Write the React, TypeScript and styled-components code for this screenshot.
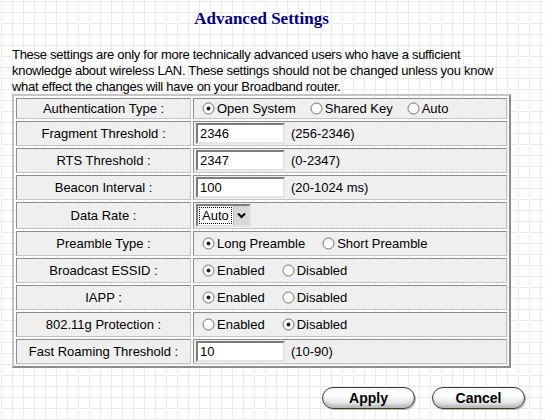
import React from 'react'
import styled, { createGlobalStyle } from 'styled-components'

const GlobalStyle = createGlobalStyle`
  html, body {
    margin: 0;
    padding: 0;
  }
  body {
    width: 545px;
    height: 420px;
    overflow: hidden;
    background-color: #ffffff;
    background-image:
      linear-gradient(to right, #ebebeb 1px, transparent 1px),
      linear-gradient(to bottom, #ebebeb 1px, transparent 1px);
    background-size: 11px 11px;
    background-position: 1px 1px;
    font-family: 'Liberation Sans', Arial, sans-serif;
    font-size: 13px;
    color: #000;
  }
`

interface RadioOpt {
  label: string
  checked?: boolean
}

type Row =
  | { label: string; kind: 'radio'; options: RadioOpt[]; gap?: number; compact?: boolean }
  | { label: string; kind: 'input'; value: string; hint: string }
  | { label: string; kind: 'select'; value: string }

const rows: Row[] = [
  {
    label: 'Authentication Type :',
    kind: 'radio',
    gap: 14,
    compact: true,
    options: [
      { label: 'Open System', checked: true },
      { label: 'Shared Key' },
      { label: 'Auto' }
    ]
  },
  { label: 'Fragment Threshold :', kind: 'input', value: '2346', hint: '(256-2346)' },
  { label: 'RTS Threshold :', kind: 'input', value: '2347', hint: '(0-2347)' },
  { label: 'Beacon Interval :', kind: 'input', value: '100', hint: '(20-1024 ms)' },
  { label: 'Data Rate :', kind: 'select', value: 'Auto' },
  {
    label: 'Preamble Type :',
    kind: 'radio',
    gap: 17,
    options: [{ label: 'Long Preamble', checked: true }, { label: 'Short Preamble' }]
  },
  {
    label: 'Broadcast ESSID :',
    kind: 'radio',
    gap: 17,
    options: [{ label: 'Enabled', checked: true }, { label: 'Disabled' }]
  },
  {
    label: 'IAPP :',
    kind: 'radio',
    gap: 17,
    options: [{ label: 'Enabled', checked: true }, { label: 'Disabled' }]
  },
  {
    label: '802.11g Protection :',
    kind: 'radio',
    gap: 17,
    options: [{ label: 'Enabled' }, { label: 'Disabled', checked: true }]
  },
  { label: 'Fast Roaming Threshold :', kind: 'input', value: '10', hint: '(10-90)' }
]

// row heights (cell box incl. border), read off the reference
const rowHeight = (row: Row) => {
  if (row.kind === 'radio') return row.compact ? 21 : 25
  if (row.kind === 'select') return 27
  return 25
}

const Radio: React.FC<{ checked?: boolean }> = ({ checked }) => (
  <RadioSvg width="13" height="13" viewBox="0 0 13 13">
    <circle cx="6.5" cy="6.5" r="5.5" fill="#fff" stroke="#707070" strokeWidth="1" />
    {checked && <circle cx="6.5" cy="6.5" r="2" fill="#222" />}
  </RadioSvg>
)

const App: React.FC = () => {
  return (
    <Page>
      <GlobalStyle />
      <Title>Advanced Settings</Title>
      <Intro>
        These settings are only for more technically advanced users who have a sufficient
        knowledge about wireless LAN. These settings should not be changed unless you know
        what effect the changes will have on your Broadband router.
      </Intro>
      <Table>
        <tbody>
          {rows.map((row) => (
            <TableRow key={row.label} h={rowHeight(row)}>
              <LabelCell>{row.label}</LabelCell>
              <ValueCell>
                {row.kind === 'radio' && (
                  <Options gap={row.gap || 14}>
                    {row.options.map((o) => (
                      <Option key={o.label}>
                        <Radio checked={o.checked} />
                        {o.label}
                      </Option>
                    ))}
                  </Options>
                )}
                {row.kind === 'input' && (
                  <Field>
                    <TextBox>{row.value}</TextBox>
                    <Hint>{row.hint}</Hint>
                  </Field>
                )}
                {row.kind === 'select' && (
                  <SelectBox>
                    <SelectValue>{row.value}</SelectValue>
                    <SelectArrow>
                      <svg width="9" height="7" viewBox="0 0 9 7">
                        <path d="M1 1.5 L4.5 5 L8 1.5" fill="none" stroke="#000" strokeWidth="2" />
                      </svg>
                    </SelectArrow>
                  </SelectBox>
                )}
              </ValueCell>
            </TableRow>
          ))}
        </tbody>
      </Table>
      <Buttons>
        <PillButton>Apply</PillButton>
        <PillButton>Cancel</PillButton>
      </Buttons>
    </Page>
  )
}

const Page = styled.div`
  width: 499px;
  padding: 9px 0 0 12px;
`

const Title = styled.div`
  font-family: 'Liberation Serif', 'Times New Roman', serif;
  font-weight: bold;
  font-size: 17px;
  color: #000080;
  text-align: center;
  line-height: 20px;
  height: 20px;
`

const Intro = styled.div`
  margin-top: 18px;
  line-height: 16px;
  font-size: 13px;
  letter-spacing: -0.28px;
`

const Table = styled.table`
  width: 499px;
  margin-top: -1px;
  border-collapse: separate;
  border-spacing: 2px;
  border: 2px solid;
  border-color: #c4c4c4 #8c8c8c #8c8c8c #c4c4c4;
`

const TableRow = styled.tr<{ h: number }>`
  height: ${({ h }) => h}px;
`

const LabelCell = styled.td`
  width: 175px;
  box-sizing: border-box;
  background: #efefef;
  border: 1px solid;
  border-color: #8c8c8c #c4c4c4 #c4c4c4 #8c8c8c;
  text-align: center;
  padding: 0;
`

const ValueCell = styled.td`
  box-sizing: border-box;
  background: #efefef;
  border: 1px solid;
  border-color: #8c8c8c #c4c4c4 #c4c4c4 #8c8c8c;
  padding: 0 2px;
`

const Options = styled.div<{ gap: number }>`
  display: flex;
  align-items: center;
  gap: ${({ gap }) => gap}px;
  padding-left: 6px;
`

const Option = styled.span`
  display: inline-flex;
  align-items: center;
  gap: 2px;
`

const RadioSvg = styled.svg`
  display: block;
  flex: none;
`

const Field = styled.div`
  display: flex;
  align-items: center;
  gap: 6px;
`

const TextBox = styled.div`
  width: 81px;
  height: 17px;
  padding: 0 2px;
  line-height: 17px;
  background: #fff;
  border: 2px solid;
  border-color: #7c7c7c #e4e4e4 #e4e4e4 #7c7c7c;
`

const Hint = styled.span``

const SelectBox = styled.div`
  display: inline-flex;
  align-items: stretch;
  height: 19px;
  vertical-align: middle;
  background: #fff;
  border: 2px solid;
  border-color: #7c7c7c #e4e4e4 #e4e4e4 #7c7c7c;
`

const SelectValue = styled.span`
  padding: 0 3px;
  line-height: 17px;
  margin: 1px;
  outline: 1px dotted #000;
  outline-offset: -1px;
`

const SelectArrow = styled.span`
  width: 15px;
  display: flex;
  align-items: center;
  justify-content: center;
  background: #d8d8d8;
  border-left: 1px solid #bcbcbc;
`

const Buttons = styled.div`
  display: flex;
  justify-content: flex-end;
  gap: 17px;
  margin-top: 19px;
  margin-right: -14px;
`

const PillButton = styled.button`
  width: 93px;
  height: 22px;
  border-radius: 11px;
  border: 1px solid #3a3a3a;
  box-shadow: 1px 1px 0 #c8b8a8, inset 0 -3px 3px rgba(0, 0, 0, 0.15);
  background: linear-gradient(to bottom, #f4f4f4 0%, #ffffff 35%, #d6d6d6 100%);
  font-family: 'Liberation Sans', Arial, sans-serif;
  font-weight: bold;
  font-size: 14px;
  color: #000;
  padding: 0;
  cursor: pointer;
`

export default App
